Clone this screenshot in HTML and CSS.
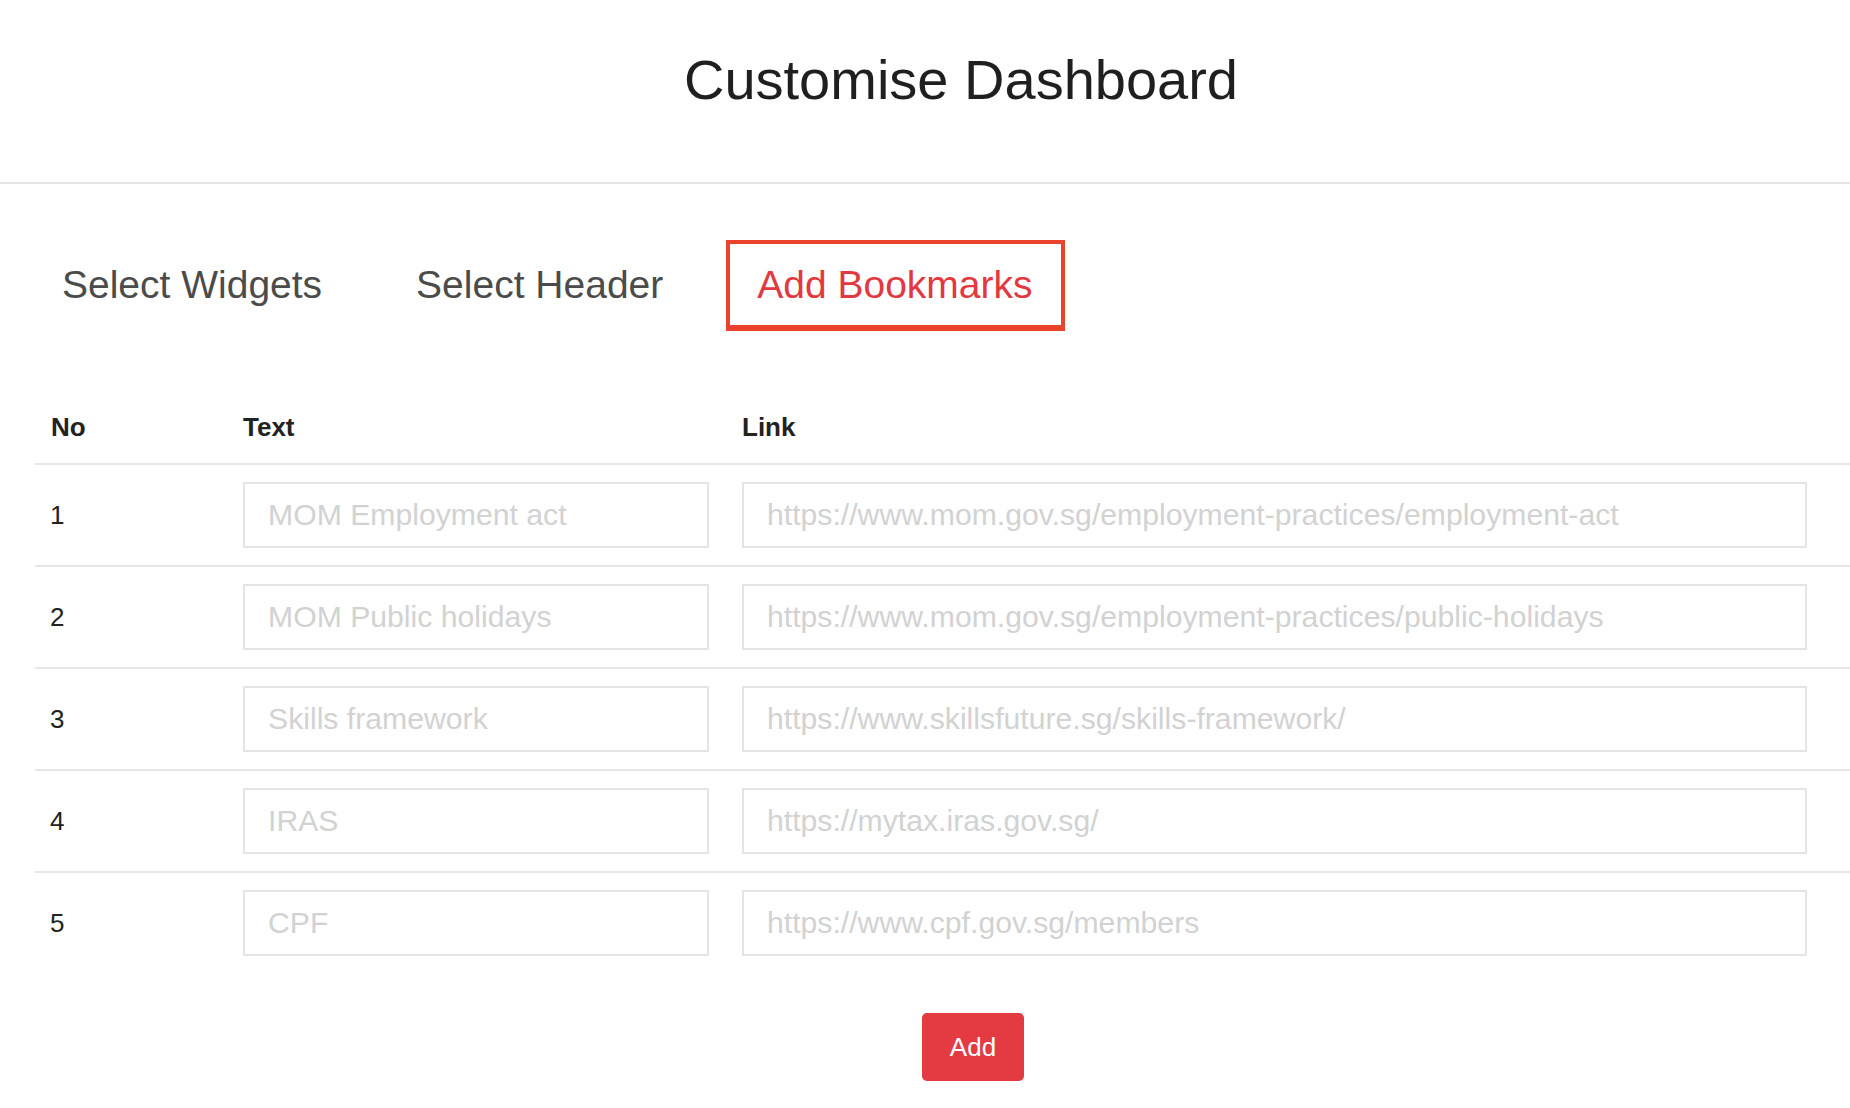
FILE: index.html
```html
<!DOCTYPE html>
<html lang="en">
<head>
<meta charset="utf-8">
<title>Customise Dashboard</title>
<link rel="stylesheet" href="styles.css">
</head>
<body>
<div class="page">
  <header class="page-header">
    <h1 class="title">Customise Dashboard</h1>
  </header>
  <main class="content">
    <nav class="tabs">
      <div class="tab">Select Widgets</div>
      <div class="tab">Select Header</div>
      <div class="tab tab-active">Add Bookmarks</div>
    </nav>
    <div class="bm-table">
      <div class="bm-row bm-head">
        <div class="cell cell-no">No</div>
        <div class="cell">Text</div>
        <div class="cell">Link</div>
      </div>
      <div class="bm-row">
        <div class="cell cell-no">1</div>
        <input class="field" type="text" placeholder="MOM Employment act">
        <input class="field" type="text" placeholder="https://www.mom.gov.sg/employment-practices/employment-act">
      </div>
      <div class="bm-row">
        <div class="cell cell-no">2</div>
        <input class="field" type="text" placeholder="MOM Public holidays">
        <input class="field" type="text" placeholder="https://www.mom.gov.sg/employment-practices/public-holidays">
      </div>
      <div class="bm-row">
        <div class="cell cell-no">3</div>
        <input class="field" type="text" placeholder="Skills framework">
        <input class="field" type="text" placeholder="https://www.skillsfuture.sg/skills-framework/">
      </div>
      <div class="bm-row">
        <div class="cell cell-no">4</div>
        <input class="field" type="text" placeholder="IRAS">
        <input class="field" type="text" placeholder="https://mytax.iras.gov.sg/">
      </div>
      <div class="bm-row">
        <div class="cell cell-no">5</div>
        <input class="field" type="text" placeholder="CPF">
        <input class="field" type="text" placeholder="https://www.cpf.gov.sg/members">
      </div>
    </div>
    <div class="actions">
      <button class="btn-add" type="button">Add</button>
    </div>
  </main>
</div>
</body>
</html>
```
FILE: styles.css
```css
html {
  overflow: hidden;
}

body {
  margin: 0;
  background: #ffffff;
  font-family: "Liberation Sans", Arial, Helvetica, sans-serif;
  color: #222222;
}

.page {
  width: 1922px;
}

.page-header {
  padding: 46px 0 69px;
  border-bottom: 2px solid #e5e5e5;
  text-align: center;
}

.title {
  margin: 0;
  font-size: 56px;
  line-height: 67px;
  font-weight: 400;
  color: #1f1f1f;
}

.content {
  padding: 0 11px 0 35px;
}

.tabs {
  display: flex;
  gap: 31px;
  margin: 56px 0 0 -4px;
}

.tab {
  padding: 18px 28px 17px 27px;
  border-style: solid;
  border-color: transparent;
  border-width: 4px 4px 6px;
  font-size: 39px;
  line-height: 46px;
  color: #4b4b4b;
}

.tab-active {
  border-color: #e9442b;
  color: #e2383f;
}

.bm-table {
  margin-top: 61px;
}

.bm-row {
  display: grid;
  grid-template-columns: 175px 466px 1065px;
  column-gap: 33px;
  align-items: center;
  padding: 17px 0;
  border-bottom: 2px solid #e6e6e6;
}

.bm-row:last-child {
  border-bottom: none;
}

.bm-head {
  padding: 20px 0 21px;
}

.cell {
  font-size: 26px;
  line-height: 30px;
  color: #222222;
}

.bm-head .cell {
  font-weight: 700;
}

.cell-no {
  padding-left: 15px;
}

.bm-head .cell-no {
  padding-left: 16px;
}

.field {
  box-sizing: border-box;
  width: 100%;
  height: 66px;
  margin: 0;
  padding: 0 21px 0 23px;
  border: 2px solid #e4e4e4;
  border-radius: 0;
  background: #ffffff;
  font-family: "Liberation Sans", Arial, Helvetica, sans-serif;
  font-size: 30.2px;
  color: #222222;
  outline: none;
}

.field::placeholder {
  color: #d2d2d2;
}

.actions {
  display: flex;
  justify-content: center;
  margin-top: 40px;
}

.btn-add {
  padding: 19px 28px;
  border: none;
  border-radius: 5px;
  background: #e43a42;
  color: #ffffff;
  font-family: "Liberation Sans", Arial, Helvetica, sans-serif;
  font-size: 26px;
  line-height: 30px;
  cursor: pointer;
}
```
